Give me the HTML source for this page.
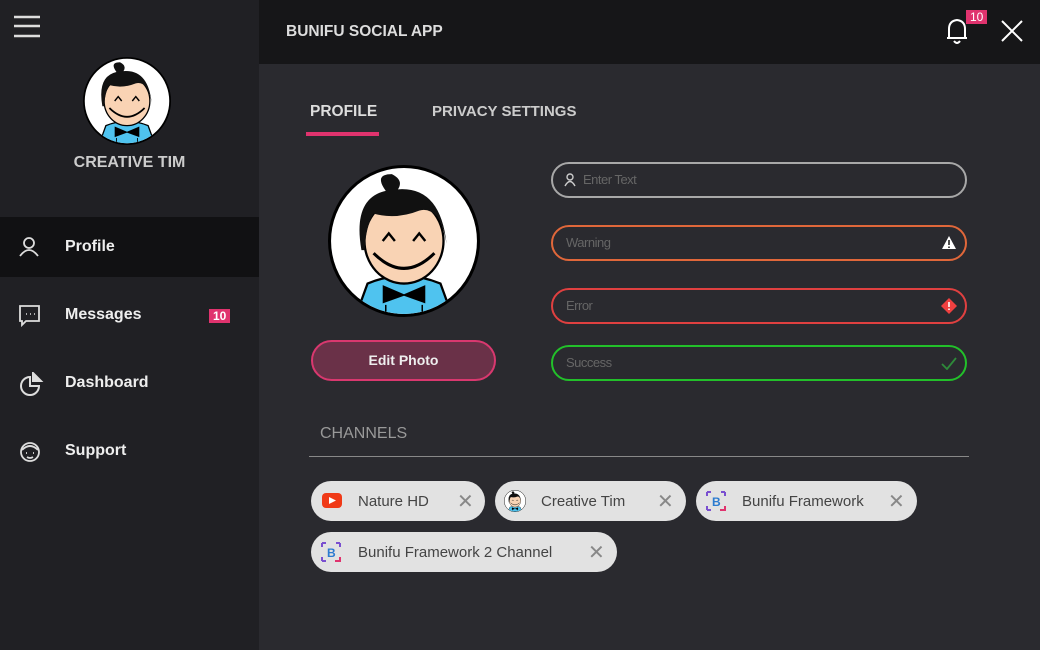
<!DOCTYPE html>
<html><head><meta charset="utf-8"><style>
*{margin:0;padding:0;box-sizing:border-box}
body{width:1040px;height:650px;overflow:hidden;background:#2a2a2f;font-family:"Liberation Sans",sans-serif;position:relative}
.side{position:absolute;left:0;top:0;width:259px;height:650px;background:#202024}
.hdr{position:absolute;left:259px;top:0;width:781px;height:64px;background:#161618}
.abs{position:absolute}
.nav{position:absolute;left:0;width:259px;height:60px;color:#eee;font-size:16px;font-weight:bold}
.nav span{position:absolute;left:65px;top:21px}
.nav svg{position:absolute;left:18px;top:19px}
.badge{position:absolute;background:#e0336e;color:#fff;font-size:12px;padding:0 4px;line-height:14px}
.inp{position:absolute;left:551px;width:416px;height:36px;border:2px solid;border-radius:18px;color:#666;font-size:13px;padding-left:13px;line-height:32px;letter-spacing:-0.5px}
.chip{position:absolute;height:40px;background:#e2e2e2;border-radius:20px;color:#444;font-size:15px}
.chip .t{position:absolute;top:12px}
.chip .x{position:absolute;top:8px;color:#888;font-size:20px}
</style></head><body>
<svg width="0" height="0" style="position:absolute"><defs>
<g id="av">
<circle cx="50" cy="50" r="49" fill="#fff" stroke="#000" stroke-width="2"/>
<clipPath id="cc"><circle cx="50" cy="50" r="48"/></clipPath>
<g clip-path="url(#cc)">
<path d="M18 100 L26 78 Q50 68 74 78 L82 100Z" fill="#4fc3ef" stroke="#000" stroke-width="1.5"/>
<path d="M36 79 L50 85 L64 79 L64 91 L50 86 L36 91Z" fill="#000"/>
<path d="M38 92V100M62 92V100" stroke="#000" stroke-width="1"/>
<ellipse cx="50" cy="50" rx="26" ry="28" fill="#f9d3b4" stroke="#000" stroke-width="1.5"/>
<path d="M22 56 Q16 22 38 17 Q30 6 42 6 Q50 10 46 16 Q74 14 78 52 Q76 40 72 34 Q66 28 60 30 Q45 36 30 32 Q25 40 24 56Z" fill="#111"/>
<path d="M36 50 L40 45 L44 50 M56 50 L60 45 L64 50" stroke="#000" stroke-width="1.6" fill="none"/>
<path d="M30 58 Q50 78 70 58" stroke="#000" stroke-width="2" fill="none"/>
</g></g>
<g id="bl"><path d="M1 1H5M1 1V5M1 19V15M1 19H5M19 1H15M19 1V5M19 19H15M19 19V15" stroke="#7a4fd0" stroke-width="2" fill="none"/><path d="M14 19H19V15" stroke="#e0336e" stroke-width="2" fill="none"/><text x="6" y="15" font-size="12" font-weight="bold" fill="#2b7bd0" font-family="Liberation Sans">B</text></g>
</defs></svg>
<div class="side">
<svg class="abs" style="left:14px;top:15px" width="26" height="24"><path d="M0 2H26M0 11H26M0 21H26" stroke="#ddd" stroke-width="2.5"/></svg>
<svg class="abs" style="left:83px;top:57px" width="88" height="88" viewBox="0 0 100 100"><use href="#av"/></svg>
<div class="abs" style="left:0;width:259px;top:154px;text-align:center;color:#ccc;font-size:16px;font-weight:bold">CREATIVE TIM</div>
<div class="nav" style="top:217px;background:#111113"><svg width="22" height="22" fill="none" stroke="#ddd" stroke-width="1.8"><circle cx="11" cy="7" r="5"/><path d="M2 20Q11 8 20 20"/></svg><span>Profile</span></div>
<div class="nav" style="top:285px"><svg width="24" height="24" fill="none" stroke="#ddd" stroke-width="1.8"><path d="M2 2H21V17H8L4 21V17H2Z"/><path d="M8 10H9M12 10H13M16 10H17" stroke-width="1.5"/></svg><span>Messages</span><div class="badge" style="left:209px;top:24px">10</div></div>
<div class="nav" style="top:353px"><svg width="26" height="26" fill="none" stroke="#ddd" stroke-width="2"><path d="M12 5A9 9 0 1 0 21 14H12Z"/><path d="M15 1L23 9L15 9Z" fill="#ddd"/></svg><span>Dashboard</span></div>
<div class="nav" style="top:421px"><svg width="24" height="24" fill="none" stroke="#ddd" stroke-width="1.8"><circle cx="12" cy="12" r="9"/><path d="M4 10Q12 2 20 10M8 13H9M15 13H16M9 17Q12 19 15 17"/></svg><span>Support</span></div>
</div>
<div class="hdr">
<div class="abs" style="left:27px;top:23px;color:#ddd;font-size:15.5px;font-weight:bold">BUNIFU SOCIAL APP</div>
<svg class="abs" style="left:686px;top:16px" width="26" height="30" fill="none" stroke="#fff" stroke-width="2"><path d="M4 22V13Q4 5 12 4Q20 5 20 13V22ZM2 22H22M9 25Q12 29 15 25"/></svg>
<div class="badge" style="left:707px;top:10px">10</div>
<svg class="abs" style="left:742px;top:20px" width="22" height="22" stroke="#fff" stroke-width="2"><path d="M1 1L21 21M21 1L1 21"/></svg>
</div>
<div class="abs" style="left:310px;top:103px;color:#ddd;font-size:15.5px;font-weight:bold">PROFILE</div>
<div class="abs" style="left:306px;top:132px;width:73px;height:4px;background:#e0336e"></div>
<div class="abs" style="left:432px;top:103px;color:#ccc;font-size:15px;font-weight:bold">PRIVACY SETTINGS</div>
<svg class="abs" style="left:328px;top:165px" width="152" height="152" viewBox="0 0 100 100"><use href="#av"/></svg>
<div class="abs" style="left:311px;top:340px;width:185px;height:41px;border:2px solid #d9386f;border-radius:21px;background:#6a3148;color:#eee;font-size:14px;font-weight:bold;text-align:center;line-height:37px">Edit Photo</div>
<div class="inp" style="top:162px;border-color:#a8a8a8;padding-left:30px">Enter Text<svg class="abs" style="left:11px;top:9px" width="12" height="14" fill="none" stroke="#ccc" stroke-width="1.4"><circle cx="6" cy="4" r="3"/><path d="M1 13Q6 4 11 13"/></svg></div>
<div class="inp" style="top:225px;border-color:#e0673a">Warning<svg class="abs" style="right:8px;top:8px" width="16" height="15"><path d="M8 1L15 14H1Z" fill="#fff"/><path d="M8 5V10M8 11.5V13" stroke="#222" stroke-width="1.6"/></svg></div>
<div class="inp" style="top:288px;border-color:#e04040">Error<svg class="abs" style="right:8px;top:8px" width="16" height="16"><path d="M8 0L16 8L8 16L0 8Z" fill="#f04040"/><path d="M8 4V9M8 10.5V12" stroke="#fff" stroke-width="1.6"/></svg></div>
<div class="inp" style="top:345px;border-color:#22c02a">Success<svg class="abs" style="right:8px;top:10px" width="16" height="13" fill="none" stroke="#2e8a3a" stroke-width="1.8"><path d="M1 7L6 12L15 1"/></svg></div>
<div class="abs" style="left:320px;top:425px;color:#999;font-size:16px">CHANNELS</div>
<div class="abs" style="left:309px;top:456px;width:660px;height:1px;background:#888"></div>
<div class="chip" style="left:311px;top:481px;width:174px"><svg class="abs" style="left:11px;top:12px" width="20" height="15"><rect width="20" height="15" rx="4" fill="#f03a17"/><path d="M7 4L14 7.5L7 11Z" fill="#fff"/></svg><span class="t" style="left:47px">Nature HD</span><span class="x" style="left:146px">✕</span></div>
<div class="chip" style="left:495px;top:481px;width:191px"><svg class="abs" style="left:9px;top:8px" width="22" height="24" viewBox="0 0 100 100"><use href="#av"/></svg><span class="t" style="left:46px">Creative Tim</span><span class="x" style="left:162px">✕</span></div>
<div class="chip" style="left:696px;top:481px;width:221px"><svg class="abs" style="left:10px;top:10px" width="20" height="20"><use href="#bl"/></svg><span class="t" style="left:46px">Bunifu Framework</span><span class="x" style="left:192px">✕</span></div>
<div class="chip" style="left:311px;top:532px;width:306px"><svg class="abs" style="left:10px;top:10px" width="20" height="20"><use href="#bl"/></svg><span class="t" style="left:47px">Bunifu Framework 2 Channel</span><span class="x" style="left:277px">✕</span></div>
</body></html>
